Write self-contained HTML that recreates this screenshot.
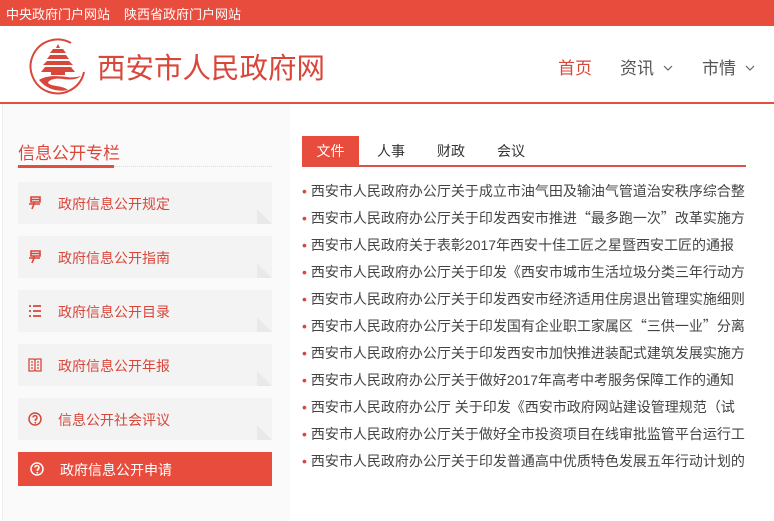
<!DOCTYPE html>
<html><head><meta charset="utf-8"><style>
*{margin:0;padding:0;box-sizing:border-box}
body{width:774px;height:521px;overflow:hidden;background:#fff;font-family:"Liberation Sans","Noto Sans CJK SC",sans-serif;position:relative}
.top{position:absolute;left:0;top:0;width:774px;height:26px;background:#e84c3d;color:#fff;font-size:13px}
.top span{position:absolute;top:4px}
.hdr-line{position:absolute;left:0;top:102px;width:774px;height:2px;background:#e0503f}
.title{position:absolute;left:97px;top:46px;font-size:28.5px;color:#d9463a}
.nav{position:absolute;top:54px;font-size:17px;color:#555}
.nav svg{margin-left:9px;vertical-align:3px}
.left{position:absolute;left:2px;top:104px;width:288px;height:417px;background:#fafafa;border-left:1px solid #eee}
.lt{position:absolute;left:18px;top:139px;font-size:17px;color:#d9463a}
.lu{position:absolute;left:18px;top:165px;width:96px;height:3px;background:#e0503f}
.ld{position:absolute;left:114px;top:166px;width:158px;border-top:1px dotted #ddd}
.item{position:absolute;left:18px;width:254px;height:42px;background:#f3f3f3;color:#d9463a;font-size:14px}
.item .t{position:absolute;left:40px;top:12px}
.item svg{position:absolute;left:10px;top:14px}
.item .c{position:absolute;right:0;bottom:0;width:0;height:0;border-style:solid;border-width:15px 0 0 15px;border-color:transparent transparent transparent #e9e9e9}
.item.on{background:#e84c3d;color:#fff;height:34px}
.item.on .t{top:8px;left:42px}
.item.on svg{top:10px;left:12px}
.tabs{position:absolute;left:302px;top:136px;width:444px;height:31px;border-bottom:2px solid #d9534a}
.tab{position:absolute;top:0;height:29px;line-height:31px;font-size:14px;color:#333}
.tab.on{background:#e84c3d;color:#fff;width:57px;text-align:center;left:0}
.list{position:absolute;left:302px;top:181px;width:450px}
.list div{height:27px;line-height:21px;font-size:14px;color:#444;white-space:nowrap;overflow:hidden}
.list div:before{content:"•";color:#d9463a;margin-right:4px}
.cq{font-family:"Noto Sans CJK SC",sans-serif}
</style></head><body>
<div class="top"><span style="left:6px">中央政府门户网站</span><span style="left:124px">陕西省政府门户网站</span></div>
<svg style="position:absolute;left:27px;top:36px" width="60" height="60" viewBox="0 0 60 60">
<path d="M44 7 A27 27 0 1 0 57 36" fill="none" stroke="#d9463a" stroke-width="2"/>
<path d="M31 8 l2 4 h-4z M26 13 h10 l3 4 h-16z M23 19 h16 l3 4 h-22z M20 25 h22 l4 4 h-30z M18 31 h26 l4 5 h-34z" fill="#d9463a"/>
<rect x="24" y="36" width="14" height="3" fill="#d9463a"/>
<path d="M12 44 c8 -5 20 -4 28 -3 c6 1 10 0 14 -1 c-4 4 -12 4 -18 3 c-6 -1 -14 0 -15 4 c4 4 14 2 20 7 c-9 2 -21 0 -29 -10z" fill="#d9463a"/>
</svg>
<div class="title">西安市人民政府网</div>
<div class="nav" style="left:558px;color:#d9463a">首页</div>
<div class="nav" style="left:620px">资讯<svg width="10" height="6" viewBox="0 0 10 6"><polyline points="1,1 5,5 9,1" fill="none" stroke="#666" stroke-width="1.2"/></svg></div>
<div class="nav" style="left:702px">市情<svg width="10" height="6" viewBox="0 0 10 6"><polyline points="1,1 5,5 9,1" fill="none" stroke="#666" stroke-width="1.2"/></svg></div>
<div class="hdr-line"></div>
<div class="left"></div>
<div class="lt">信息公开专栏</div><div class="lu"></div><div class="ld"></div>
<div class="item" style="top:182px"><svg width="14" height="14" viewBox="0 0 14 14"><path d="M3 1h9v5H3z M3 3.5h9 M6 6v2 M1 8h11 M6 8l-2 5" fill="none" stroke="#d9463a" stroke-width="1.6"/></svg><span class="t">政府信息公开规定</span><i class="c"></i></div>
<div class="item" style="top:236px"><svg width="14" height="14" viewBox="0 0 14 14"><path d="M3 1h9v5H3z M3 3.5h9 M6 6v2 M1 8h11 M6 8l-2 5" fill="none" stroke="#d9463a" stroke-width="1.6"/></svg><span class="t">政府信息公开指南</span><i class="c"></i></div>
<div class="item" style="top:290px"><svg width="14" height="14" viewBox="0 0 14 14"><path d="M1 2h2M1 7h2M1 12h2M5 2h8M5 7h8M5 12h8" stroke="#d9463a" stroke-width="1.8"/></svg><span class="t">政府信息公开目录</span><i class="c"></i></div>
<div class="item" style="top:344px"><svg width="14" height="14" viewBox="0 0 14 14"><path d="M1 1h5l1 1 1-1h5v12H8l-1-1-1 1H1z M7 2v10 M3 4h2M3 7h2M3 10h2M9 4h2M9 7h2M9 10h2" fill="none" stroke="#d9463a" stroke-width="1.3"/></svg><span class="t">政府信息公开年报</span><i class="c"></i></div>
<div class="item" style="top:398px"><svg width="14" height="14" viewBox="0 0 14 14"><circle cx="7" cy="7" r="6" fill="none" stroke="#d9463a" stroke-width="1.5"/><path d="M5 5.5a2 2 0 1 1 2.5 2V9" fill="none" stroke="#d9463a" stroke-width="1.5"/><circle cx="7.3" cy="10.8" r="0.9" fill="#d9463a"/></svg><span class="t">信息公开社会评议</span><i class="c"></i></div>
<div class="item on" style="top:452px"><svg width="14" height="14" viewBox="0 0 14 14"><circle cx="7" cy="7" r="6" fill="none" stroke="#fff" stroke-width="1.5"/><path d="M5 5.5a2 2 0 1 1 2.5 2V9" fill="none" stroke="#fff" stroke-width="1.5"/><circle cx="7.3" cy="10.8" r="0.9" fill="#fff"/></svg><span class="t">政府信息公开申请</span></div>
<div class="tabs">
<div class="tab on">文件</div>
<div class="tab" style="left:75px">人事</div>
<div class="tab" style="left:135px">财政</div>
<div class="tab" style="left:195px">会议</div>
</div>
<div class="list">
<div>西安市人民政府办公厅关于成立市油气田及输油气管道治安秩序综合整</div>
<div>西安市人民政府办公厅关于印发西安市推进<span class="cq">“</span>最多跑一次<span class="cq">”</span>改革实施方</div>
<div>西安市人民政府关于表彰2017年西安十佳工匠之星暨西安工匠的通报</div>
<div>西安市人民政府办公厅关于印发《西安市城市生活垃圾分类三年行动方</div>
<div>西安市人民政府办公厅关于印发西安市经济适用住房退出管理实施细则</div>
<div>西安市人民政府办公厅关于印发国有企业职工家属区<span class="cq">“</span>三供一业<span class="cq">”</span>分离</div>
<div>西安市人民政府办公厅关于印发西安市加快推进装配式建筑发展实施方</div>
<div>西安市人民政府办公厅关于做好2017年高考中考服务保障工作的通知</div>
<div>西安市人民政府办公厅 关于印发《西安市政府网站建设管理规范（试</div>
<div>西安市人民政府办公厅关于做好全市投资项目在线审批监管平台运行工</div>
<div>西安市人民政府办公厅关于印发普通高中优质特色发展五年行动计划的</div>
</div>
</body></html>
